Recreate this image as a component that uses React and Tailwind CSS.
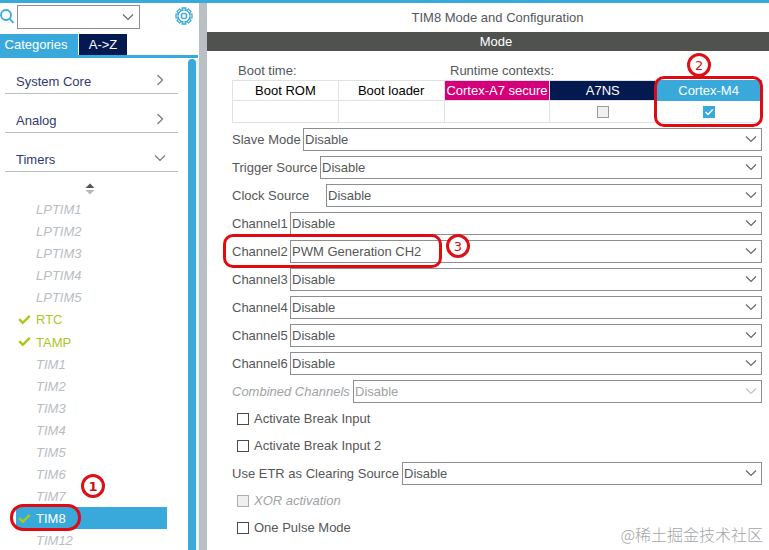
import React from 'react';

const peripherals = [
  { name: 'LPTIM1', state: 'off' },
  { name: 'LPTIM2', state: 'off' },
  { name: 'LPTIM3', state: 'off' },
  { name: 'LPTIM4', state: 'off' },
  { name: 'LPTIM5', state: 'off' },
  { name: 'RTC', state: 'on' },
  { name: 'TAMP', state: 'on' },
  { name: 'TIM1', state: 'off' },
  { name: 'TIM2', state: 'off' },
  { name: 'TIM3', state: 'off' },
  { name: 'TIM4', state: 'off' },
  { name: 'TIM5', state: 'off' },
  { name: 'TIM6', state: 'off' },
  { name: 'TIM7', state: 'off' },
  { name: 'TIM8', state: 'selected' },
  { name: 'TIM12', state: 'off' },
];

const channels = ['Channel1', 'Channel2', 'Channel3', 'Channel4', 'Channel5', 'Channel6'];

const Chevron = ({ className = '', dir = 'down' }) => (
  <svg
    className={className}
    width="12"
    height="12"
    viewBox="0 0 12 12"
    fill="none"
    stroke="currentColor"
    strokeWidth="1.2"
    aria-hidden="true"
  >
    {dir === 'down' ? <path d="M1 3.5L6 8.5L11 3.5" /> : <path d="M3.5 1L8.5 6L3.5 11" />}
  </svg>
);

const Check = ({ className = '' }) => (
  <svg className={className} width="13" height="11" viewBox="0 0 13 11" fill="none" aria-hidden="true">
    <path d="M1.2 5.2L4.8 8.8L11.8 1.8" stroke="#a9c81f" strokeWidth="2.4" />
  </svg>
);

const Gear = () => {
  const teeth = [0, 45, 90, 135, 180, 225, 270, 315];
  return (
    <svg width="18" height="18" viewBox="0 0 18 18" fill="none" stroke="#39a9dc" aria-hidden="true">
      {teeth.map((deg) => (
        <path key={deg} d="M7.2 3.2V1H10.8V3.2" strokeWidth="1.3" transform={`rotate(${deg} 9 9)`} />
      ))}
      <circle cx="9" cy="9" r="6" strokeWidth="1.1" />
      <circle cx="9" cy="9" r="2.6" strokeWidth="1.4" />
    </svg>
  );
};

// red numbered bubble
const Step = ({ n, className }) => (
  <span
    className={`absolute z-20 flex h-6 w-6 items-center justify-center rounded-full border-[3px] border-[#dc1016] bg-white font-['DejaVu_Sans',sans-serif] text-[13px] leading-none text-[#c8141a] ${className}`}
  >
    {n}
  </span>
);

// red outline around a highlighted control
const Outline = ({ className }) => (
  <span className={`pointer-events-none absolute z-10 border-[3px] border-[#e00a10] ${className}`} />
);

const Section = ({ title, open }) => (
  <button type="button" className="flex h-[39px] w-full items-center justify-between border-b border-[#b9bfc1] pt-4 pr-3 pl-[11px] text-[#2f3a73]">
    {title}
    <Chevron dir={open ? 'down' : 'right'} className="mb-1 text-[#777]" />
  </button>
);

const SelectRow = ({ id, label, labelWidth, value = 'Disable', disabled, children }) => (
  <div className="relative flex h-7 items-center">
    <label htmlFor={id} className={`shrink-0 pt-0.5 whitespace-nowrap ${labelWidth} ${disabled ? 'text-[#a0a3a5] italic' : ''}`}>
      {label}
    </label>
    <div className="relative min-w-0 flex-1">
      <select
        id={id}
        disabled={disabled}
        className={`block h-[23px] w-full appearance-none border border-[#8c8f91] bg-white pt-0.5 pl-px ${disabled ? 'text-[#a0a3a5] opacity-100' : ''}`}
      >
        <option>{value}</option>
      </select>
      <Chevron className={`pointer-events-none absolute top-[5px] right-[5px] ${disabled ? 'text-[#c0c3c5]' : 'text-[#666]'}`} />
    </div>
    {children}
  </div>
);

const CheckRow = ({ label, disabled }) => (
  <label className={`flex h-[27px] items-center gap-[5px] pl-[5px] ${disabled ? 'text-[#a0a3a5] italic' : ''}`}>
    <input
      type="checkbox"
      disabled={disabled}
      className={`h-3 w-3 appearance-none border ${disabled ? 'border-[#a9adaf] bg-[#eef0f0]' : 'border-[#4a4a4a] bg-white'}`}
    />
    {label}
  </label>
);

const Sidebar = () => (
  <aside className="flex w-[199px] shrink-0 flex-col">
    <div className="flex h-[31px] items-start pt-0.5">
      <svg className="mt-1" width="14" height="15" viewBox="0 0 14 15" fill="none" stroke="#39a9dc" strokeWidth="1.8" aria-hidden="true">
        <circle cx="6" cy="6" r="5" />
        <path d="M9.5 9.5L13.5 14" />
      </svg>
      <div className="relative ml-[3px]">
        <input type="text" aria-label="Search" className="block h-6 w-[123px] border border-[#8c8f91] bg-white px-1" />
        <button type="button" aria-label="Show list" className="absolute top-1.5 right-1.5 text-[#666]">
          <Chevron />
        </button>
      </div>
      <button type="button" aria-label="Settings" className="mt-0.5 ml-[35px]">
        <Gear />
      </button>
    </div>

    <div className="mr-px flex gap-px border-b-[3px] border-[#39a9dc] text-white">
      <button type="button" className="h-[21px] w-[78px] bg-[#39a9dc] pr-1.5">Categories</button>
      <button type="button" className="h-[21px] w-12 bg-[#03194f]">A-&gt;Z</button>
    </div>

    <div className="flex min-h-0 flex-1 justify-between">
      <div className="-mt-[3px] ml-[5px] w-[173px]">
        <Section title="System Core" />
        <Section title="Analog" />
        <Section title="Timers" open />
        <div className="flex h-[26px] items-center justify-center pt-2">
          <svg width="10" height="12" viewBox="0 0 10 12" className="mr-[3px]" aria-hidden="true">
            <path d="M5 0.5L9.5 5H0.5Z" fill="#555" />
            <path d="M5 11.5L9.5 7H0.5Z" fill="#b5b8ba" />
          </svg>
        </div>
        <ul className="mr-[11px] ml-[11px]">
          {peripherals.map(({ name, state }) => (
            <li key={name} className={`relative ${name === 'TAMP' ? 'h-[23px]' : 'h-[22px]'}`}>
              <button
                type="button"
                className={`flex h-full w-full items-center pt-0.5 ${
                  state === 'off' ? 'text-[#b7bdc2] italic' : state === 'on' ? 'text-[#a9c81f]' : 'bg-[#39a9dc] text-white'
                }`}
              >
                <span className="w-5 pb-0.5 pl-0.5">{state !== 'off' && <Check />}</span>
                {name}
              </button>
              {state === 'selected' && (
                <>
                  <Outline className="-top-[3px] -left-1.5 h-[27px] w-[71px] rounded-[13px]" />
                  <Step n="1" className="-top-[33px] left-[65px] font-bold" />
                </>
              )}
            </li>
          ))}
        </ul>
      </div>
      <div className="mt-px flex w-[11px] border-r-[3px] border-[#eaf3f8]">
        <div className="w-2 rounded-t-full bg-[#39a9dc]" />
      </div>
    </div>
  </aside>
);

const ContextTable = () => (
  <table className="w-full table-fixed border-collapse text-center">
    <thead>
      <tr className="h-5">
        <th className="border border-[#e0e1e2] p-0 font-normal text-black">Boot ROM</th>
        <th className="border border-[#e0e1e2] p-0 font-normal text-black">Boot loader</th>
        <th className="border border-[#e0e1e2] bg-[#d4007a] p-0 font-normal whitespace-nowrap text-white">Cortex-A7 secure</th>
        <th className="border border-[#e0e1e2] bg-[#03194f] p-0 font-normal text-white">A7NS</th>
        <th className="relative border border-[#39a9dc] bg-[#39a9dc] p-0 font-normal text-white">
          Cortex-M4
          <Outline className="-top-[5px] -left-0.5 h-[51px] w-[109px] rounded-[10px]" />
          <Step n="2" className="-top-7 left-[31px]" />
        </th>
      </tr>
    </thead>
    <tbody>
      <tr className="h-[22px]">
        <td className="border border-[#e0e1e2] p-0" />
        <td className="border border-[#e0e1e2] p-0" />
        <td className="border border-[#e0e1e2] p-0" />
        <td className="border border-[#e0e1e2] p-0">
          <input
            type="checkbox"
            aria-label="A7NS"
            disabled
            className="mx-auto block h-3 w-3 appearance-none border border-[#999] bg-[#f0f0f2]"
          />
        </td>
        <td className="border border-[#e0e1e2] p-0">
          <div className="relative mx-auto h-3 w-3">
            <input
              type="checkbox"
              aria-label="Cortex-M4"
              defaultChecked
              className="block h-3 w-3 appearance-none bg-[#39a9dc]"
            />
            <svg className="pointer-events-none absolute inset-0" width="12" height="12" viewBox="0 0 12 12" fill="none" aria-hidden="true">
              <path d="M2.5 6L5 8.5L9.8 3.5" stroke="white" strokeWidth="1.4" />
            </svg>
          </div>
        </td>
      </tr>
    </tbody>
  </table>
);

const ModePanel = () => (
  <main className="min-w-0 flex-1">
    <h1 className="h-[29px] pl-[19px] text-center leading-[29px]">TIM8 Mode and Configuration</h1>
    <h2 className="h-[19px] bg-[#505250] pl-4 text-center leading-[19px] text-white">Mode</h2>

    <div className="pt-[11px] pr-[7px] pl-[25px]">
      <div className="grid h-[18px] grid-cols-5 items-center whitespace-nowrap">
        <span className="col-span-2 pl-1.5">Boot time:</span>
        <span className="col-span-3 pl-1.5">Runtime contexts:</span>
      </div>
      <ContextTable />

      <form className="pt-0.5">
        <SelectRow id="slave" label="Slave Mode" labelWidth="w-[71px]" />
        <SelectRow id="trigger" label="Trigger Source" labelWidth="w-[88px]" />
        <SelectRow id="clock" label="Clock Source" labelWidth="w-[94px]" />
        {channels.map((name) => (
          <SelectRow
            key={name}
            id={name}
            label={name}
            labelWidth="w-[58px]"
            value={name === 'Channel2' ? 'PWM Generation CH2' : 'Disable'}
          >
            {name === 'Channel2' && (
              <>
                <Outline className="-top-[3px] -left-[9px] h-[34px] w-[219px] rounded-[10px]" />
                <Step n="3" className="-top-[3px] left-[214px]" />
              </>
            )}
          </SelectRow>
        ))}
        <SelectRow id="combined" label="Combined Channels" labelWidth="w-[121px]" disabled />
        <CheckRow label="Activate Break Input" />
        <CheckRow label="Activate Break Input 2" />
        <SelectRow id="etr" label="Use ETR as Clearing Source" labelWidth="w-[170px]" />
        <CheckRow label="XOR activation" disabled />
        <CheckRow label="One Pulse Mode" />
      </form>
    </div>
  </main>
);

const App = () => {
  return (
    <div className="relative flex h-screen overflow-hidden border-t-[3px] border-[#39a9dc] bg-white font-['Liberation_Sans',Arial,sans-serif] text-[13px] leading-4 text-[#555759]">
      <Sidebar />
      <div className="w-2 shrink-0 bg-[#b8c0c3]" />
      <ModePanel />
      <p className="absolute right-1.5 bottom-1 font-['Noto_Sans_CJK_SC',sans-serif] text-[16px] leading-6 font-light text-[#a3a5a7]">
        @稀土掘金技术社区
      </p>
    </div>
  );
};

export default App;
